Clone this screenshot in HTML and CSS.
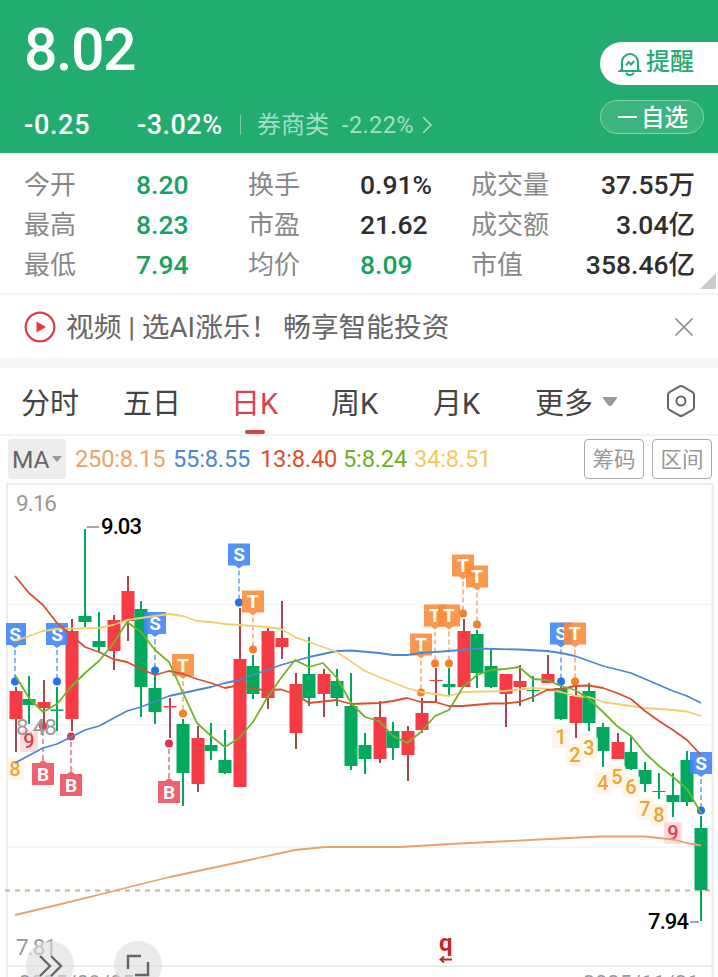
FILE: index.html
```
<!DOCTYPE html>
<html lang="zh-CN">
<head>
	<meta charset="utf-8">
	<title>行情</title>
	<link rel="stylesheet" href="styles.css">
</head>
<body>
	<header class="header">
		<div class="quote">
			<div class="price">8.02</div>
			<div class="change">
				<span class="diff">-0.25</span>
				<span class="percent">-3.02%</span>
				<span class="sector">券商类</span>
				<span class="sector-change">-2.22%</span>
				<svg class="arrow" width="10" height="18" viewBox="0 0 10 18"><path d="M1 1l8 8-8 8"/></svg>
			</div>
		</div>
		<div class="actions">
			<button type="button" class="remind">
				<svg width="24" height="26" viewBox="0 0 24 26">
					<path d="M4 18.500V11a8 8 0 0 1 16 0v7.500l2 1.500H2z"/>
					<path d="M8.500 21.500a3.500 2.500 0 0 0 7 0M8 14.500l2.500-3.500 2.500 2.500 3-3.500"/>
				</svg>
				<span>提醒</span>
			</button>
			<button type="button" class="favorite"><i></i><span>自选</span></button>
		</div>
	</header>

	<section class="stats">
		<span>今开</span><b class="down">8.20</b><span>换手</span><b>0.91%</b><span>成交量</span><b class="last">37.55万</b>
		<span>最高</span><b class="down">8.23</b><span>市盈</span><b>21.62</b><span>成交额</span><b class="last">3.04亿</b>
		<span>最低</span><b class="down">7.94</b><span>均价</span><b class="down">8.09</b><span>市值</span><b class="last">358.46亿</b>
		<i class="corner"></i>
	</section>

	<section class="notice">
		<svg width="32" height="32" viewBox="0 0 32 32"><circle cx="16" cy="16" r="14.300"/><path d="M12.500 10.500v11l9.500-5.500z"/></svg>
		<p>视频 | 选AI涨乐！<span>畅享智能投资</span></p>
		<svg class="close" width="20" height="20" viewBox="0 0 20 20"><path d="M1.500 1.500l17 17M18.500 1.500l-17 17"/></svg>
	</section>

	<nav class="tabs">
		<a>分时</a>
		<a>五日</a>
		<a class="active">日K</a>
		<a>周K</a>
		<a>月K</a>
		<a>更多<svg width="14" height="9" viewBox="0 0 14 9"><path d="M1 0h12q2 0 .5 2L9 8q-2 2-4 0L.5 2Q-1 0 1 0z"/></svg></a>
		<svg class="settings" width="32" height="34" viewBox="0 0 32 34">
			<path d="M14.500 2.500q1.500-.8 3 0l10 5.700q1.500.9 1.500 2.500v12.600q0 1.600-1.500 2.500l-10 5.700q-1.500.8-3 0l-10-5.700q-1.500-.9-1.500-2.500V10.700q0-1.600 1.500-2.500z"/>
			<circle cx="16" cy="17" r="4.500"/>
		</svg>
	</nav>

	<section class="legend">
		<button type="button" class="ma">MA<i></i></button>
		<div class="averages">
			<span class="ma250">250:8.15</span>
			<span class="ma55">55:8.55</span>
			<span class="ma13">13:8.40</span>
			<span class="ma5">5:8.24</span>
			<span class="ma34">34:8.51</span>
		</div>
		<button type="button" class="tool">筹码</button>
		<button type="button" class="tool">区间</button>
	</section>

	<svg class="chart" id="chart" width="718" height="495" viewBox="0 482 718 495"></svg>

	<script src="chart.js"></script>
</body>
</html>
```
FILE: styles.css
```
* {
	box-sizing: border-box;
}
body {
	margin: 0;
	height: 977px;
	overflow: hidden;
	background-color: #ffffff;
	color: #2e2e2e;
	font-family: Roboto, "Noto Sans CJK SC", sans-serif;
}
button {
	font-family: inherit;
	padding: 0;
	cursor: pointer;
}
svg {
	display: block;
	flex: none;
	fill: none;
}
.header {
	display: flex;
	justify-content: space-between;
	height: 153px;
	background-color: #22ac6f;
	color: #ffffff;
}
.quote {
	padding-left: 24px;
}
.price {
	height: 98px;
	padding-top: 14px;
	font-size: 59px;
	line-height: 72px;
	font-weight: 500;
	letter-spacing: -1.5px;
}
.change {
	display: flex;
	align-items: center;
	height: 54px;
	font-size: 27px;
	font-weight: 500;
	white-space: nowrap;
}
.diff {
	width: 113px;
	letter-spacing: 0.7px;
}
.percent {
	width: 103px;
	letter-spacing: 0.5px;
}
.sector {
	width: 102px;
	padding-left: 16px;
	line-height: 20px;
	border-left: 1px solid #7acda9;
	font-size: 24px;
	font-weight: 400;
	color: #a3dec5;
}
.sector-change {
	width: 80px;
	font-size: 23.5px;
	font-weight: 400;
	letter-spacing: 0.4px;
	color: #a3dec5;
}
.arrow {
	stroke: #a3dec5;
	stroke-width: 1.6;
}
.actions {
	width: 118px;
	padding-top: 42px;
}
.remind {
	display: flex;
	align-items: center;
	width: 118px;
	height: 43px;
	padding-left: 18px;
	border: none;
	border-radius: 22px 0 0 22px;
	background-color: #ffffff;
	color: #22ac6f;
	font-size: 24px;
	line-height: 40px;
	font-weight: 500;
}
.remind span {
	padding-bottom: 3px;
}
.remind svg {
	margin-right: 4px;
	stroke: #22ac6f;
	stroke-width: 2;
}
.favorite {
	display: flex;
	align-items: center;
	width: 104px;
	height: 34px;
	margin-top: 15px;
	padding-left: 17px;
	border: 1px solid #83d0ae;
	border-radius: 17px;
	background-color: #3bb47f;
	color: #ffffff;
	font-size: 23.5px;
	line-height: 30px;
	font-weight: 500;
}
.favorite i {
	width: 19px;
	height: 2px;
	margin-right: 4px;
	background-color: #ffffff;
}
.favorite span {
	padding-top: 2px;
}
.stats {
	position: relative;
	display: grid;
	grid-template-columns: 112px 112px 112px 111px 100px 124px;
	grid-auto-rows: 40px;
	height: 142px;
	padding: 12px 0 0 24px;
	border-bottom: 2px solid #f4f4f4;
	font-size: 26px;
	line-height: 40px;
	white-space: nowrap;
}
.stats span {
	color: #888888;
}
.stats b {
	font-size: 26.5px;
	font-weight: 500;
}
.stats .down {
	color: #18a161;
}
.stats .last {
	text-align: right;
}
.corner {
	position: absolute;
	right: 2px;
	bottom: 4px;
	border-left: 16px solid transparent;
	border-bottom: 16px solid #cccccc;
}
.notice {
	display: flex;
	align-items: center;
	height: 73px;
	padding: 0 24px;
	border-bottom: 10px solid #f7f7f7;
	color: #666666;
}
.notice circle {
	stroke: #dc3e4a;
	stroke-width: 2.2;
}
.notice circle + path {
	fill: #ed3441;
}
.notice p {
	margin: 0 auto 0 10px;
	padding-bottom: 3px;
	font-size: 27.7px;
}
.notice p span {
	margin-left: 5px;
}
.close {
	stroke: #888888;
	stroke-width: 1.6;
}
.tabs {
	display: grid;
	grid-template-columns: 102px 108px 100px 102px 102px 130px 32px;
	align-items: center;
	height: 68px;
	padding-left: 21px;
	border-bottom: 2px solid #f3f3f3;
	font-size: 29px;
	color: #444444;
}
.tabs a {
	position: relative;
	display: flex;
	align-items: center;
	gap: 10px;
}
.tabs a svg {
	fill: #999999;
}
.tabs .active {
	color: #dd414c;
}
.active::after {
	content: "";
	position: absolute;
	left: 14px;
	bottom: -12px;
	width: 20px;
	height: 4px;
	border-radius: 2px;
	background-color: #d0464f;
}
.settings {
	stroke: #666666;
	stroke-width: 2;
}
.legend {
	display: flex;
	align-items: center;
	height: 46px;
	padding: 0 6px 0 8px;
}
.ma {
	display: flex;
	align-items: center;
	gap: 2px;
	width: 58px;
	height: 40px;
	padding-left: 4px;
	border: none;
	border-radius: 4px;
	background-color: #ededed;
	color: #666666;
	font-size: 24.5px;
}
.ma i {
	border: 5px solid transparent;
	border-top: 6px solid #999999;
	border-bottom: 0;
}
.averages {
	display: grid;
	grid-template-columns: 98px 87px 83px 71px 80px;
	margin: 0 auto 0 9px;
	font-size: 23.7px;
	letter-spacing: -0.2px;
}
.ma250 { color: #eea468; }
.ma55 { color: #4f86d0; }
.ma13 { color: #d94f30; }
.ma5 { color: #6eb02e; }
.ma34 { color: #f5c95f; }
.tool {
	width: 60px;
	height: 40px;
	margin-left: 8px;
	padding-bottom: 4px;
	border: 1.5px solid #aaaaaa;
	border-radius: 4px;
	background-color: #ffffff;
	color: #999999;
	font-size: 21.5px;
}

/* chart */
.grid { stroke: #f3f3f3; stroke-width: 1.5; }
.frame { stroke: #ececec; stroke-width: 2; }
.last-price { stroke: #c9b58d; stroke-width: 2; stroke-dasharray: 5 5; }
.up { fill: #f63b45; }
.fall { fill: #02a95c; }
.up-wick { fill: #ab4552; }
.line { stroke-width: 1.8; stroke-linejoin: round; }
.line-ma250 { stroke: #eaa16a; }
.line-ma55 { stroke: #4f86d0; }
.line-ma13 { stroke: #d94f30; }
.line-ma5 { stroke: #72b32c; }
.line-ma34 { stroke: #f2ce70; }
.flag { opacity: 0.9; }
.flag-S { fill: #4086f7; }
.flag-T { fill: #fb8c3c; }
.flag-B { fill: #ee5060; }
.dot-S { fill: #2372ee; }
.dot-T { fill: #f5802a; }
.dot-B { fill: #df3546; }
.stem { stroke-width: 1.5; stroke-dasharray: 5 3; opacity: 0.7; }
.stem-S { stroke: #2372ee; }
.stem-T { stroke: #f5802a; }
.stem-B { stroke: #df3546; }
.flag-text {
	fill: #ffffff;
	font-size: 19px;
	font-weight: 700;
	text-anchor: middle;
}
.count { fill: #fff4e6; }
.count-end { fill: #fbd3d5; }
.count-text {
	fill: #eea52f;
	font-size: 20px;
	font-weight: 500;
	text-anchor: middle;
}
.count-end + .count-text { fill: #e23b4a; }
.scale { fill: #999999; font-size: 22.5px; }
.extreme { fill: #000000; font-size: 22px; font-weight: 500; }
.tick { stroke: #888888; stroke-width: 1.5; }
.date { fill: #999999; font-size: 21px; letter-spacing: 1px; }
.event { fill: #c4262a; font-size: 24px; font-weight: 700; }
.event-arrow { stroke: #c4262a; stroke-width: 1.8; }
.round { fill: #dddddd; opacity: 0.62; }
.round-icon { stroke: #666666; stroke-width: 2.4; }
```
FILE: chart.js
```
const chart = document.querySelector("#chart");
let out = "";

// direction, high, body top, body bottom, low
const candles = [
	["r", 687, 691, 719, 752], ["g", 676, 699, 705, 724], ["r", 680, 702, 708, 725],
	["g", 687, 709.5, 711, 731], ["r", 619, 631, 719, 731], ["g", 529, 616, 622, 627],
	["g", 612, 641, 647, 652], ["r", 615, 620, 651, 670], ["r", 576, 591, 621, 641],
	["g", 601, 609, 687, 717], ["g", 673, 688, 712, 724], ["r", 698, 706, 707.5, 738],
	["g", 719, 724, 773, 806], ["r", 726, 738, 784, 792], ["g", 723, 745, 751, 760],
	["g", 730, 760, 773, 774], ["r", 608, 659, 787, 787], ["g", 655, 666, 694, 699],
	["r", 627, 631, 698, 709], ["r", 601, 638, 647, 659], ["r", 673, 684, 733, 749],
	["g", 637, 674, 698, 706], ["r", 669, 674, 694, 717], ["g", 669, 681, 698, 706],
	["g", 673, 706, 766, 770], ["g", 733, 745, 759, 774], ["r", 701, 717, 759, 763],
	["g", 722, 731, 748, 760], ["r", 726, 731, 755, 781], ["r", 698, 713, 730, 733],
	["r", 668, 680, 681, 702], ["g", 668, 684, 687, 695], ["r", 619, 631, 687, 687],
	["g", 630, 634, 673, 688], ["g", 649, 666, 687, 688], ["r", 674, 674, 694, 727],
	["r", 665, 681, 687, 706], ["g", 676, 690, 691, 702], ["r", 655, 674, 683, 683],
	["g", 685, 688, 719, 720], ["r", 686, 696, 723, 738], ["g", 683, 691, 723, 731],
	["g", 723, 727, 751, 767], ["r", 733, 742, 759, 759], ["g", 736, 752, 769, 770],
	["g", 762, 770, 784, 792], ["g", 773, 791, 792, 799], ["g", 773, 795, 802, 817],
	["g", 751, 760, 802, 806], ["g", 816, 828, 890, 921]
];

const lines = {
	ma250: "15,915 57,905 110,892 133,886 170,877 207,869 240,862 295,850 325,847 400,847 460,843.500 550,839 600,836.500 645,836.500 659,838 673,839.500 687,843 701,845.500",
	ma55: "15,763 43,748 57,744 85,730 99,726 127,711 141,707 169,696 183,693 211,687 225,683 239,680 253,675 281,665 295,661 309,657 337,651 351,650.500 379,653 393,655 407,655 421,653 449,651 477,648.500 519,649.500 547,651 561,653 575,656 603,666 631,673 659,685 673,691 687,696 701,703",
	ma34: "15,641 43,631 57,629 99,628 113,625 127,620 155,616 169,614 183,616 197,621 211,622 225,624 239,625 267,627 281,629 295,637 337,652 365,671 379,677 407,688 421,692 449,696 463,692 505,691 533,688 547,689 561,692 575,696 589,697 603,702 631,706 645,708 673,710 687,711.500 701,716",
	ma13: "15,576 29,593 43,605 57,623 71,635 85,647 99,652 113,659 127,662 141,669 155,675 169,671 183,674 197,679 211,683 225,688 239,685 253,689 267,690 281,689.500 295,694 309,703 337,700 351,704 379,703 393,701 407,698 421,702 435,702 449,706 463,706 491,703.500 505,703.500 519,702 533,697 547,690 561,689 575,686 589,685.500 603,688 617,693 631,699 645,711 659,721 673,730 687,740 701,755",
	ma5: "15,675 29,698 43,712 57,704 71,687 85,673 99,661 113,644 127,622 141,632 155,650 169,662 183,693 197,723 211,736 225,747 239,738 253,722 267,698 281,678 295,660 309,667 323,663 337,678 351,703 365,717 379,721 393,736 407,743 421,732 435,716 449,710 463,687 477,675 491,670 505,669 519,667 533,679 547,680 561,686 575,690 589,699 603,712 617,726 631,736 645,753 659,766 673,777 687,789 701,813"
};

// letter, x, flag top, dot y
const flags = [
	["S", 15, 623, 681.5], ["S", 57, 623, 681.5], ["S", 155, 612, 670.5], ["T", 183, 654, 713.5],
	["S", 239, 543.5, 602.5], ["T", 253, 590.5, 649.5], ["T", 421, 633.5, 692.5],
	["T", 435, 604.5, 663.5], ["T", 449, 604.5, 663.5], ["T", 463, 554.5, 613.5],
	["T", 477, 565.5, 624.5], ["S", 561, 622.5, 681.5], ["T", 575, 622.5, 681.5],
	["S", 701, 752, 810.5], ["B", 43, 763, 726], ["B", 71, 774, 736.5], ["B", 169, 781, 743.5]
];

const counts = [
	[8, 15, 769], [9, 29, 741], [1, 561, 737], [2, 575, 755], [3, 589, 748], [4, 603, 783],
	[5, 617, 777], [6, 631, 787], [7, 645, 809], [8, 659, 815], [9, 673, 833]
];

function drawGrid() {
	[604.5, 725, 847].forEach(y => {
		out += `<path class="grid" d="M7 ${y}H712"/>`;
	});
	out += `<path class="frame" d="M7 978V484H712.500V978M7 966H712"/>`;
	out += `<path class="last-price" d="M5 890.500H711"/>`;
}

function drawCandles() {
	candles.forEach(([dir, high, top, bottom, low], i) => {
		const x = 15 + 14 * i + (dir === "r" ? 1 : 0);
		out += `<rect class="${dir === "r" ? "up-wick" : "fall"}" x="${x - 1}" y="${high}" width="2" height="${low - high}"/>`;
		out += `<rect class="${dir === "r" ? "up" : "fall"}" x="${x - 6.5}" y="${top}" width="13" height="${bottom - top}"/>`;
	});
}

function drawCounts() {
	counts.forEach(([n, x, y]) => {
		out += `<rect class="${n === 9 ? "count-end" : "count"}" x="${x - 9}" y="${y - 11}" width="18" height="22" rx="2" opacity="0.8"/>`;
		out += `<text class="count-text" x="${x}" y="${y + 7}">${n}</text>`;
	});
}

function drawFlags() {
	flags.forEach(([type, x, y, dot]) => {
		const left = Math.max(x - 11, 6);
		const right = Math.min(x + 11, 712);
		const below = type === "B";
		const tip = below ? `V${y}H${x + 4}l-4 -3l-4 3H${left}z` : `V${y + 22}H${x + 4}l-4 3l-4 -3H${left}z`;
		const start = below ? y + 22 : y;
		out += `<path class="stem stem-${type}" d="M${x} ${below ? y - 3 : y + 27}V${dot}"/>`;
		out += `<path class="flag flag-${type}" d="M${left} ${start}H${right}${tip}"/>`;
		out += `<text class="flag-text" x="${x}" y="${y + 17.5}">${type}</text>`;
		out += `<circle class="dot-${type}" cx="${x}" cy="${dot}" r="4"/>`;
	});
}

function drawLines() {
	Object.keys(lines).forEach(name => {
		out += `<polyline class="line line-${name}" points="${lines[name]}"/>`;
	});
}

function drawLabels() {
	out += `<text class="scale" x="16" y="511" textLength="41">9.16</text>`;
	out += `<text class="scale" x="16" y="735" textLength="41">8.48</text>`;
	out += `<text class="scale" x="16" y="955" textLength="41">7.81</text>`;
	out += `<path class="tick" d="M87 527H99M690 922H699"/>`;
	out += `<text class="extreme" x="101" y="533.500" textLength="41">9.03</text>`;
	out += `<text class="extreme" x="648" y="928.500" textLength="41">7.94</text>`;
	out += `<text class="event" x="439" y="951">q</text>`;
	out += `<path class="event-arrow" d="M452 959.500H441M444 956.500l-3.500 3 3.500 3"/>`;
	out += `<text class="date" x="19" y="990" textLength="116">2025/09/05</text>`;
	out += `<text class="date" x="583" y="990" textLength="117">2025/11/21</text>`;
}

function drawButtons() {
	out += `<circle class="round" cx="50" cy="965" r="24"/><circle class="round" cx="138" cy="965" r="24"/>`;
	out += `<path class="round-icon" d="M40 956l10 10-10 10M51 956l10 10-10 10"/>`;
	out += `<path class="round-icon" d="M128 969V956H141M148 962V975H135"/>`;
}

drawGrid();
drawCandles();
drawCounts();
drawFlags();
drawLines();
drawLabels();
drawButtons();
chart.innerHTML = out;
```
